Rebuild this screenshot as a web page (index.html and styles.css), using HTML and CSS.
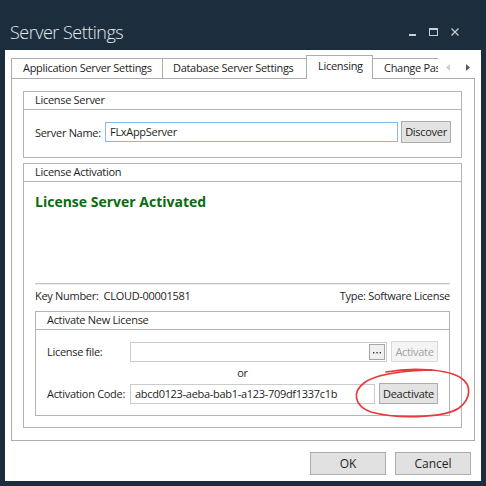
FILE: index.html
```html
<!DOCTYPE html>
<html>
<head>
<meta charset="utf-8">
<title>Server Settings</title>
<link rel="stylesheet" href="styles.css">
</head>
<body>
<div class="titlebar">
  <div class="title">Server Settings</div>
  <div class="controls">
    <span class="ctl-min"></span>
    <span class="ctl-max"></span>
    <svg class="ctl-close" width="8" height="8" viewBox="0 0 8 8"><path d="M0.5 0.5 L7.5 7.5 M7.5 0.5 L0.5 7.5" stroke="#c9cfd4" stroke-width="1.2" fill="none"/></svg>
  </div>
</div>
<div class="window">
  <div class="tabstrip">
    <div class="tabs">
      <div class="tab t1">Application Server Settings</div>
      <div class="tab t2">Database Server Settings</div>
      <div class="tab t3 active">Licensing</div>
      <div class="tab t4">Change Password</div>
    </div>
    <div class="scroller">
      <svg width="4" height="7" viewBox="0 0 4 7"><path d="M4 0 L0 3.5 L4 7 Z" fill="#cfcfcf"/></svg>
      <svg width="4" height="7" viewBox="0 0 4 7"><path d="M0 0 L4 3.5 L0 7 Z" fill="#5a5a5a"/></svg>
    </div>
  </div>
  <div class="panel">
    <div class="group g1">
      <div class="ghead">License Server</div>
      <div class="gbody">
        <div class="row srow">
          <span class="lbl lbl-srv">Server Name:</span>
          <div class="input focus">FLxAppServer</div>
          <div class="btn btn-discover">Discover</div>
        </div>
      </div>
    </div>
    <div class="group g2">
      <div class="ghead">License Activation</div>
      <div class="gbody g2body">
        <div class="status">License Server Activated</div>
        <div class="sep"></div>
        <div class="keyrow"><span>Key Number:&nbsp; CLOUD-00001581</span><span>Type: Software License</span></div>
        <div class="group sub">
          <div class="ghead">Activate New License</div>
          <div class="gbody subbody">
            <div class="row arow">
              <span class="lbl lbl-sub">License file:</span>
              <div class="input file"><span class="ellipsis"><svg width="14" height="14" viewBox="0 0 14 14"><rect x="3" y="7" width="1.4" height="1.4" fill="#333"/><rect x="6.3" y="7" width="1.4" height="1.4" fill="#333"/><rect x="9.6" y="7" width="1.4" height="1.4" fill="#333"/></svg></span></div>
              <div class="btn disabled btn-activate">Activate</div>
            </div>
            <div class="or">or</div>
            <div class="row arow">
              <span class="lbl lbl-sub">Activation Code:</span>
              <div class="input">abcd0123-aeba-bab1-a123-709df1337c1b</div>
              <div class="btn btn-deactivate">Deactivate</div>
            </div>
          </div>
        </div>
      </div>
    </div>
  </div>
  <div class="footer">
    <div class="btn big">OK</div>
    <div class="btn big">Cancel</div>
  </div>
  <svg class="annot" width="125" height="62" viewBox="0 0 125 62"><path d="M36 10 C62 5 98 7 111 16 C122 23 121 37 109 46 C96 55 50 58 21 50 C4 44 2 30 14 21 C24 13 45 9 82 8" fill="none" stroke="#e8393b" stroke-width="1.7" stroke-linecap="round"/></svg>
</div>
</body>
</html>
```
FILE: styles.css
```css
* { box-sizing: border-box; }
html, body { margin: 0; padding: 0; }
body {
  width: 486px;
  height: 486px;
  overflow: hidden;
  background: #1c2e3e;
  font-family: "Open Sans", "Noto Sans", "DejaVu Sans", sans-serif;
  font-size: 11px;
  letter-spacing: -0.3px;
  color: #1e1e1e;
}
.titlebar {
  height: 50px;
  display: flex;
  padding-left: 10px;
}
.title {
  padding-top: 20px;
  font-size: 18px;
  line-height: 24px;
  font-weight: 300;
  color: #e4e9ed;
  letter-spacing: -0.5px;
}
.controls {
  margin-left: auto;
  margin-top: 28px;
  height: 8px;
  display: flex;
  align-items: flex-end;
  padding-right: 27px;
}
.ctl-min { width: 7px; height: 2px; background: #c9cfd4; }
.ctl-max { width: 9px; height: 8px; border: 1px solid #c9cfd4; border-top-width: 2px; margin-left: 13px; }
.ctl-close { margin-left: 13px; display: block; }

.window {
  position: relative;
  margin: 0 5px;
  height: 431px;
  background: #fff;
  padding: 5px 6px 0 6px;
}
.tabstrip {
  display: flex;
  height: 23px;
  align-items: flex-end;
}
.tabs {
  width: 427px;
  height: 24px;
  overflow: hidden;
  display: flex;
  align-items: flex-end;
  position: relative;
  z-index: 2;
  margin-bottom: -1px;
}
.tab {
  flex: none;
  height: 20px;
  border: 1px solid #acacac;
  border-bottom: 0;
  background: #fff;
  line-height: 18px;
  padding-left: 11px;
  white-space: nowrap;
  overflow: hidden;
  margin-bottom: 1px;
}
.tab + .tab { margin-left: -1px; }
.t1 { width: 152px; }
.t2 { width: 145px; padding-left: 10px; }
.t3 { width: 67px; padding-left: 11px; }
.t4 { width: 90px; padding-left: 11px; }
.tab.active {
  height: 24px;
  margin-bottom: 0;
  line-height: 20px;
  position: relative;
  z-index: 3;
}
.scroller {
  flex: 1;
  display: flex;
  align-items: center;
  height: 23px;
  padding-top: 2px;
  padding-left: 8px;
  gap: 16px;
}
.scroller svg { display: block; }

.panel {
  height: 363px;
  border: 1px solid #acacac;
  padding: 12px 12px 0 11px;
  display: flex;
  flex-direction: column;
  gap: 5px;
}
.group {
  border: 1px solid #b4b4b4;
}
.g1 { height: 67px; }
.g2 { height: 265px; }
.ghead {
  height: 18px;
  border-bottom: 1px solid #b4b4b4;
  line-height: 16px;
  padding-left: 11px;
}
.row {
  display: flex;
  align-items: center;
}
.srow {
  padding: 11px 10px 0 11px;
  height: 33px;
}
.lbl { flex: none; white-space: nowrap; }
.lbl-srv { width: 70px; }
.lbl-sub { width: 83px; }
.input {
  flex: 1;
  height: 20px;
  border: 1px solid #cbcbcb;
  line-height: 18px;
  padding-left: 4px;
  white-space: nowrap;
  overflow: hidden;
  background: #fff;
}
.input.focus { border-color: #8cb7e0; }
.btn {
  flex: none;
  border: 1px solid #adadad;
  background: #e3e3e3;
  text-align: center;
  white-space: nowrap;
}
.btn-discover { width: 50px; height: 22px; line-height: 20px; margin-left: 3px; }
.g2body {
  padding: 0 11px 11px 11px;
  display: flex;
  flex-direction: column;
}
.status {
  margin-top: 10px;
  height: 19px;
  line-height: 19px;
  font-size: 14px;
  font-weight: 700;
  color: #0b6b10;
  letter-spacing: 0;
}
.sep {
  margin-top: 72px;
  height: 2px;
  border-top: 1px solid #c6c6c6;
  border-bottom: 1px solid #ebebeb;
}
.keyrow {
  height: 21px;
  line-height: 21px;
  display: flex;
  justify-content: space-between;
  margin-bottom: 5px;
}
.sub { height: 105px; }
.subbody { padding: 11px 11px 0 11px; }
.arow { height: 21px; }
.file {
  display: flex;
  justify-content: flex-end;
  align-items: center;
  padding: 0 1px 0 0;
}
.ellipsis {
  width: 16px;
  height: 16px;
  border: 1px solid #a6a6a6;
  background: #f0f0f0;
}
.ellipsis svg { display: block; }
.btn-activate { width: 47px; height: 21px; line-height: 19px; margin-left: 4px; }
.btn.disabled { background: #f4f4f4; border-color: #dadada; color: #a2a2a2; }
.btn-deactivate { width: 59px; height: 21px; line-height: 19px; margin-left: 4px; }
.or {
  height: 21px;
  line-height: 21px;
  text-align: center;
}
.footer {
  display: flex;
  justify-content: flex-end;
  gap: 9px;
  margin-top: 11px;
  padding-right: 4px;
}
.btn.big { width: 76px; height: 23px; line-height: 21px; font-size: 12px; background: #e1e1e1; letter-spacing: 0; }
.annot {
  position: absolute;
  left: 345px;
  top: 312px;
}
```
